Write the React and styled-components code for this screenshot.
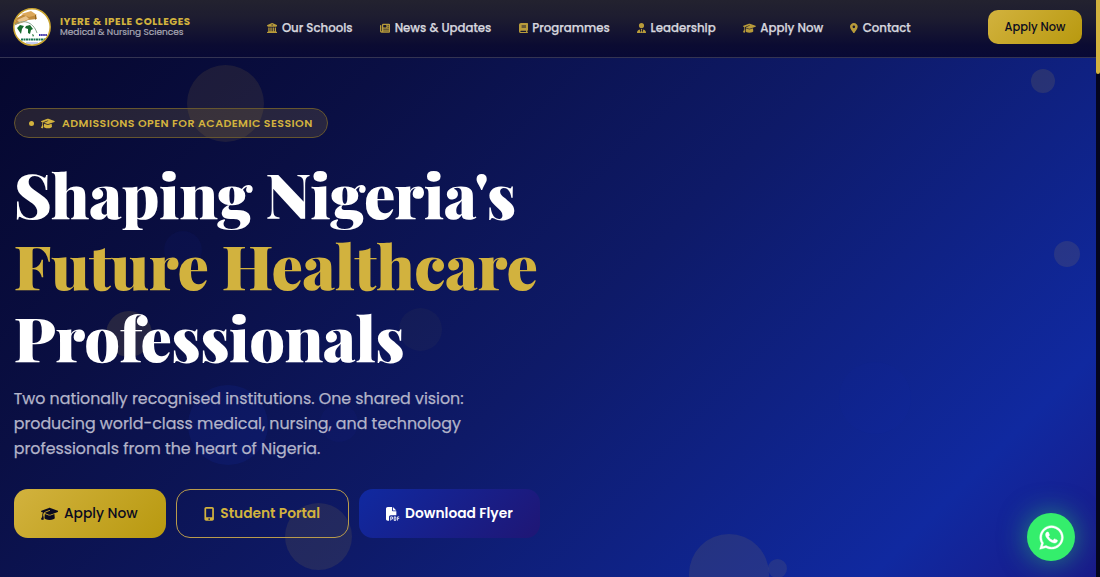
import React from 'react';
import styled, { createGlobalStyle, css } from 'styled-components';
import {
  FaBuildingColumns,
  FaNewspaper,
  FaBook,
  FaUserTie,
  FaGraduationCap,
  FaLocationDot,
  FaMobileScreenButton,
  FaFilePdf,
  FaWhatsapp,
} from 'react-icons/fa6';

const GlobalStyle = createGlobalStyle`
  * {
    box-sizing: border-box;
    margin: 0;
    padding: 0;
  }

  :root {
    --gold: #d2b23e;
    --gold-dark: #b8990f;
    --sans: Poppins, Inter, sans-serif;
    --serif: 'Playfair Display', 'Liberation Serif', serif;
  }

  body {
    background: #05052a;
    font-family: var(--sans);
    overflow: hidden;
  }
`;

const Page = styled.div`
  display: flex;
  height: 577px;
  overflow: hidden;
`;

const Main = styled.div`
  position: relative;
  flex: 1;
  display: flex;
  flex-direction: column;
  overflow: hidden;
  background: linear-gradient(135deg, #05062b 0, #0a0f44 320px, #0e1a68 640px, #1029a0 1024px, #1a1a88 1190px);
`;

const ScrollTrack = styled.div`
  width: 4px;
  background: #04051f;
`;

const ScrollThumb = styled.div`
  height: 74px;
  border-radius: 0 0 2px 2px;
  background: var(--gold);
`;

const Header = styled.header`
  position: relative;
  z-index: 2;
  display: flex;
  align-items: center;
  height: 58px;
  padding: 0 14px 0 13px;
  border-bottom: 1px solid #343452;
  background: linear-gradient(180deg, #23222f 0%, #1d1c30 32%, #0b0b32 80%, #080935 100%);
`;

const Brand = styled.div`
  display: flex;
  align-items: center;
  gap: 9px;
  width: 254px;
  margin-top: -3px;
`;

const BrandName = styled.div`
  color: var(--gold);
  font-size: 10.3px;
  font-weight: 700;
  line-height: 10px;
  letter-spacing: 0.52px;
  white-space: nowrap;
`;

const BrandSub = styled.div`
  color: #a9a9b6;
  font-size: 9px;
  line-height: 10px;
  white-space: nowrap;
  -webkit-text-stroke: 0.2px currentColor;
`;

const Nav = styled.nav`
  display: flex;
  gap: 27.2px;
  margin-top: -1px;
`;

// Icon glyphs share a height but differ in width, so each one sets its own ratio
const IconSlot = styled.span`
  display: inline-flex;
  flex: none;

  svg {
    width: ${({ $ratio }) => $ratio || 1}em;
    height: 1em;
  }
`;

const NavItem = styled.a`
  display: flex;
  align-items: center;
  gap: 4.6px;
  color: #d6d6de;
  font-size: 11.78px;
  font-weight: 500;
  white-space: nowrap;
  -webkit-text-stroke: 0.25px currentColor;

  ${IconSlot} {
    color: #b89b3a;
    font-size: 10.3px;
    -webkit-text-stroke: 0;
  }
`;

const HeaderButton = styled.button`
  width: 94px;
  height: 34px;
  padding-top: 1px;
  margin: -4px 0 0 auto;
  border: none;
  border-radius: 10px;
  background: linear-gradient(135deg, var(--gold), var(--gold-dark));
  color: #0a0a20;
  font: 500 11.4px var(--sans);
`;

const Hero = styled.section`
  position: relative;
  z-index: 1;
  display: flex;
  flex-direction: column;
  align-items: flex-start;
  padding: 50px 13.7px 0;
`;

const Pill = styled.div`
  display: flex;
  align-items: center;
  width: 314px;
  height: 30px;
  padding: 1px 0 0 14.5px;
  border: 1px solid #66562f;
  border-radius: 15px;
  background: rgba(212, 175, 55, 0.15);
  color: var(--gold);
  font-size: 11px;
  font-weight: 600;
  letter-spacing: 0.44px;
  white-space: nowrap;

  ${IconSlot} {
    margin: 0 7px;
  }
`;

const Dot = styled.span`
  width: 5px;
  height: 5px;
  border-radius: 50%;
  background: var(--gold);
`;

const Title = styled.h1`
  margin-top: 20px;
  color: #fff;
  font-family: var(--serif);
  font-size: 62.2px;
  font-weight: 900;
  line-height: 71.25px;
  letter-spacing: -0.48px;
`;

const TitleLine = styled.span`
  display: block;
  color: ${({ $gold }) => ($gold ? 'var(--gold)' : '#fff')};
  white-space: nowrap;
`;

const Lead = styled.p`
  margin-top: 13.9px;
  color: #b3b4c9;
  font-size: 15.83px;
  line-height: 25px;
  -webkit-text-stroke: 0.25px currentColor;
`;

const LeadLine = styled.span`
  display: block;
  white-space: nowrap;
`;

const Actions = styled.div`
  display: flex;
  gap: 10.3px;
  margin-top: 28px;
`;

const variants = {
  gold: css`
    width: 152.5px;
    background: linear-gradient(135deg, var(--gold), var(--gold-dark));
    color: #0a0a20;
    font-weight: 500;
  `,
  outline: css`
    width: 172.5px;
    border: 1.5px solid #b99b4c;
    color: var(--gold);
    font-weight: 600;
  `,
  royal: css`
    width: 181px;
    background: linear-gradient(135deg, #1029a0, #1f1675);
    color: #fff;
    font-weight: 600;
  `,
};

const ActionButton = styled.button`
  display: flex;
  align-items: center;
  justify-content: center;
  gap: 5.5px;
  height: 49px;
  padding: 1px 1px 0 0;
  border: none;
  border-radius: 14px;
  background: transparent;
  font-family: var(--sans);
  font-size: 13.8px;
  white-space: nowrap;
  ${({ $variant }) => variants[$variant]}
`;

const Bubble = styled.span`
  position: absolute;
  left: ${({ $x }) => $x}px;
  top: ${({ $y }) => $y}px;
  width: ${({ $size }) => $size}px;
  height: ${({ $size }) => $size}px;
  border-radius: 50%;
  background: ${({ $blue }) => ($blue ? '#1b3bd0' : '#d4af37')};
  opacity: ${({ $alpha }) => $alpha};
`;

const WhatsAppButton = styled.a`
  position: absolute;
  z-index: 3;
  right: 21px;
  bottom: 16px;
  display: flex;
  align-items: center;
  justify-content: center;
  width: 48px;
  height: 48px;
  border-radius: 50%;
  background: #34ee6c;
  box-shadow: 0 0 28px rgba(52, 238, 108, 0.5);
  color: #fff;
  font-size: 27px;

  svg {
    stroke: currentColor;
    stroke-width: 8px;
  }
`;

const bubbles = [
  { x: 187, y: 65, size: 77, alpha: 0.1 },
  { x: 1031, y: 69, size: 24, alpha: 0.13 },
  { x: 1054, y: 241, size: 26, alpha: 0.12 },
  { x: 164, y: 231, size: 38, alpha: 0.06, blue: true },
  { x: 106, y: 311, size: 46, alpha: 0.14 },
  { x: 399, y: 308, size: 43, alpha: 0.04 },
  { x: 188, y: 385, size: 80, alpha: 0.12, blue: true },
  { x: 320, y: 404, size: 38, alpha: 0.06, blue: true },
  { x: 285, y: 503, size: 67, alpha: 0.11 },
  { x: 839, y: 362, size: 72, alpha: 0.04, blue: true },
  { x: 689, y: 534, size: 80, alpha: 0.11 },
  { x: 768, y: 559, size: 19, alpha: 0.1 },
];

const navItems = [
  { label: 'Our Schools', icon: FaBuildingColumns, ratio: 1 },
  { label: 'News & Updates', icon: FaNewspaper, ratio: 1 },
  { label: 'Programmes', icon: FaBook, ratio: 0.875 },
  { label: 'Leadership', icon: FaUserTie, ratio: 0.875 },
  { label: 'Apply Now', icon: FaGraduationCap, ratio: 1.25 },
  { label: 'Contact', icon: FaLocationDot, ratio: 0.75 },
];

const actions = [
  { label: 'Apply Now', icon: FaGraduationCap, ratio: 1.25, variant: 'gold' },
  { label: 'Student Portal', icon: FaMobileScreenButton, ratio: 0.75, variant: 'outline' },
  { label: 'Download Flyer', icon: FaFilePdf, ratio: 1, variant: 'royal' },
];

const Crest = () => (
  <svg width="38" height="38" viewBox="0 0 38 38">
    <defs>
      <clipPath id="crest">
        <circle cx="19" cy="19" r="17.6" />
      </clipPath>
    </defs>
    <circle cx="19" cy="19" r="18.2" fill="#fff" stroke="#c8a32e" strokeWidth="1.5" />
    <g clipPath="url(#crest)">
      <path d="M2 11 13 5l10 2 1 4-9 1-4 2-9 3Z" fill="#c08a3c" />
      <path d="M8 6 18 3l6 4-8 2Z" fill="#dba75a" />
      <path d="m4 12 9-4 3 3-9 4Z" fill="#e9c48c" />
      <path d="M22.5 7v4.5" stroke="#91641f" strokeWidth="1" />
      <path d="M2 17C9 11 20 13 24 25" fill="none" stroke="#86a28b" strokeWidth="1" />
      <path d="m4 20 3-3 4 1-2 3-1 5-2-3ZM13 18l4-1 3 4-2 1-1 4-2-1v-4l-3-1ZM19 26l2 1-1 2Z" fill="#166a2c" />
      <path d="M26 27h8" stroke="#3b2ea8" strokeWidth="2.2" strokeDasharray="1.6 .5" />
      <path d="M8 31.5h24" stroke="#15724d" strokeWidth="2" strokeDasharray="2 .5" />
      <path d="M13 35h12" stroke="#8c9be0" strokeWidth="1" />
    </g>
  </svg>
);

const App = () => {
  return (
    <Page>
      <GlobalStyle />
      <Main>
        {bubbles.map(({ x, y, size, alpha, blue }) => (
          <Bubble key={`${x}-${y}`} $x={x} $y={y} $size={size} $alpha={alpha} $blue={blue} />
        ))}

        <Header>
          <Brand>
            <Crest />
            <div>
              <BrandName>IYERE &amp; IPELE COLLEGES</BrandName>
              <BrandSub>Medical &amp; Nursing Sciences</BrandSub>
            </div>
          </Brand>
          <Nav>
            {navItems.map(({ label, icon: Icon, ratio }) => (
              <NavItem key={label}>
                <IconSlot $ratio={ratio}>
                  <Icon />
                </IconSlot>
                {label}
              </NavItem>
            ))}
          </Nav>
          <HeaderButton>Apply Now</HeaderButton>
        </Header>

        <Hero>
          <Pill>
            <Dot />
            <IconSlot $ratio={1.25}>
              <FaGraduationCap />
            </IconSlot>
            ADMISSIONS OPEN FOR ACADEMIC SESSION
          </Pill>

          <Title>
            <TitleLine>Shaping Nigeria's</TitleLine>
            <TitleLine $gold>Future Healthcare</TitleLine>
            <TitleLine>Professionals</TitleLine>
          </Title>

          <Lead>
            <LeadLine>Two nationally recognised institutions. One shared vision:</LeadLine>
            <LeadLine>producing world-class medical, nursing, and technology</LeadLine>
            <LeadLine>professionals from the heart of Nigeria.</LeadLine>
          </Lead>

          <Actions>
            {actions.map(({ label, icon: Icon, ratio, variant }) => (
              <ActionButton key={label} $variant={variant}>
                <IconSlot $ratio={ratio}>
                  <Icon />
                </IconSlot>
                {label}
              </ActionButton>
            ))}
          </Actions>
        </Hero>

        <WhatsAppButton>
          <FaWhatsapp />
        </WhatsAppButton>
      </Main>
      <ScrollTrack>
        <ScrollThumb />
      </ScrollTrack>
    </Page>
  );
};

export default App;
